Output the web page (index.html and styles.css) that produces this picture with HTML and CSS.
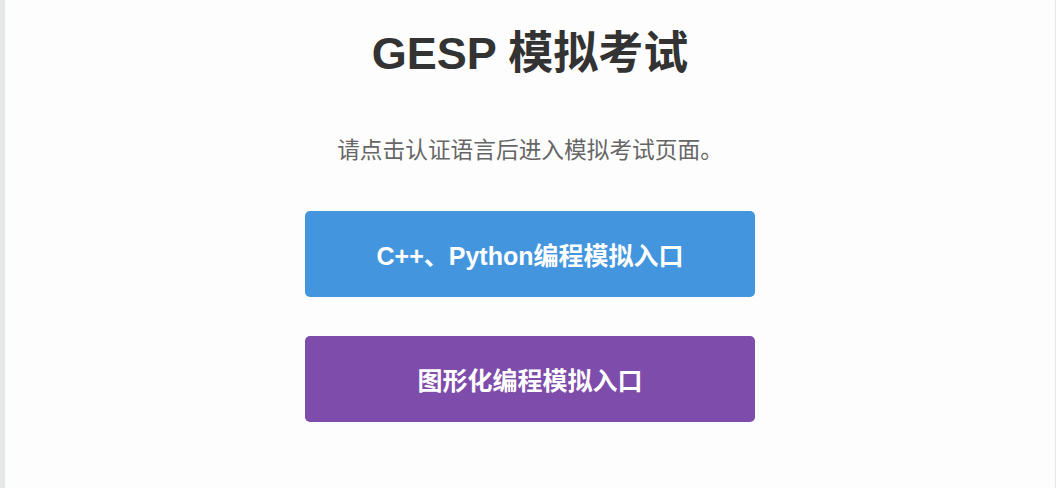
FILE: index.html
```html
<!DOCTYPE html>
<html lang="zh-CN">
<head>
<meta charset="utf-8">
<title>GESP 模拟考试</title>
<link rel="stylesheet" href="styles.css">
</head>
<body>
<main class="page">
  <h1 class="title">GESP 模拟考试</h1>
  <p class="subtitle">请点击认证语言后进入模拟考试页面。</p>
  <div class="actions">
    <a class="btn btn-blue" href="#">C++、Python编程模拟入口</a>
    <a class="btn btn-purple" href="#">图形化编程模拟入口</a>
  </div>
</main>
</body>
</html>
```
FILE: styles.css
```css
html, body {
  margin: 0;
  padding: 0;
  height: 100%;
}
body {
  background: #e6e8e8;
  padding: 0 1px 0 5px;
  box-sizing: border-box;
  font-family: "Liberation Sans", Arial, "Noto Sans CJK SC", sans-serif;
}
.page {
  background: #fdfdfd;
  height: 100%;
  display: flex;
  flex-direction: column;
  align-items: center;
  padding-top: 28px;
  box-sizing: border-box;
}
.title {
  margin: 0;
  font-size: 45px;
  line-height: 52px;
  font-weight: bold;
  color: #333333;
}
.subtitle {
  margin: 55px 0 0;
  font-size: 22.7px;
  line-height: 30px;
  color: #666666;
}
.actions {
  margin-top: 46px;
  display: flex;
  flex-direction: column;
  gap: 39px;
}
.btn {
  width: 450px;
  height: 86px;
  border-radius: 5px;
  display: flex;
  align-items: center;
  justify-content: center;
  color: #ffffff;
  font-size: 25px;
  font-weight: bold;
  text-decoration: none;
}
.btn-blue {
  background: #4396de;
}
.btn-purple {
  background: #7e4cab;
}
```
